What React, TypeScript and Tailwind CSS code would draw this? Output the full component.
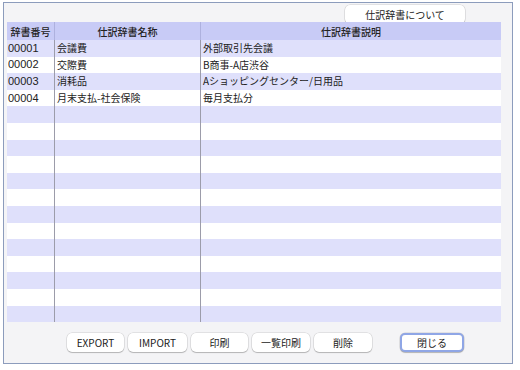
import React from "react";

const rows: [string, string, string][] = [
  ["00001", "会議費", "外部取引先会議"],
  ["00002", "交際費", "B商事-A店渋谷"],
  ["00003", "消耗品", "Aショッピングセンター/日用品"],
  ["00004", "月末支払-社会保険", "毎月支払分"],
];

const TOTAL_ROWS = 17;

const Btn = ({ label, w, focus }: { label: string; w: string; focus?: boolean }) => (
  <div
    className={
      "h-[19px] flex items-center justify-center rounded-[5px] bg-white text-[10px] text-[#222] shadow-[0_0_0_0.5px_rgba(0,0,0,0.15),0_1px_1px_rgba(0,0,0,0.2)] " +
      w +
      (focus ? " border-[2px] border-[#8fa6e6]" : "")
    }
  >
    {label}
  </div>
);

export default function App() {
  const list = Array.from({ length: TOTAL_ROWS }, (_, i) => rows[i] ?? ["", "", ""]);
  return (
    <div
      className="w-[520px] h-[370px] bg-white pl-[3px] pt-[2px]"
      style={{ fontFamily: '"Noto Sans CJK JP", "Noto Sans", sans-serif' }}
    >
      <div className="w-[510px] h-[362px] border border-[#8c9cbc] bg-[#f4f4f6] flex flex-col">
        {/* top bar */}
        <div className="h-[19px] flex items-start pt-[2px] pl-[341px]">
          <Btn label="仕訳辞書について" w="w-[120px] h-[15px]" />
        </div>

        {/* table */}
        <div className="pl-[3px] w-[497px]">
          <div className="h-[18px] bg-[#c8cbf6] flex text-[10px] text-[#222] font-medium">
            <div className="w-[48px] flex items-center justify-center border-r border-[#aeb1de]">辞書番号</div>
            <div className="w-[146px] flex items-center justify-center border-r border-[#aeb1de]">仕訳辞書名称</div>
            <div className="flex-1 flex items-center justify-center">仕訳辞書説明</div>
          </div>
          {list.map((r, i) => (
            <div
              key={i}
              className={
                "h-[16.6px] flex text-[10px] text-[#222] leading-none " +
                (i % 2 === 0 ? "bg-[#dfe0fb]" : "bg-white")
              }
            >
              <div className="w-[48px] flex items-center pl-[1px] border-r border-[#9c9caa] text-[11px] font-['Liberation_Sans',sans-serif]">
                {r[0]}
              </div>
              <div className="w-[146px] flex items-center pl-[2px] border-r border-[#9c9caa]">{r[1]}</div>
              <div className="flex-1 flex items-center pl-[2px]">{r[2]}</div>
            </div>
          ))}
        </div>

        {/* bottom buttons */}
        <div className="flex-1 flex items-center pl-[63px] pb-[1px] gap-[4px]">
          <Btn label="EXPORT" w="w-[57px]" />
          <Btn label="IMPORT" w="w-[59px]" />
          <Btn label="印刷" w="w-[57px]" />
          <Btn label="一覧印刷" w="w-[58px]" />
          <Btn label="削除" w="w-[58px]" />
          <div className="w-[20px]" />
          <Btn label="閉じる" w="w-[64px]" focus />
        </div>
      </div>
    </div>
  );
}
